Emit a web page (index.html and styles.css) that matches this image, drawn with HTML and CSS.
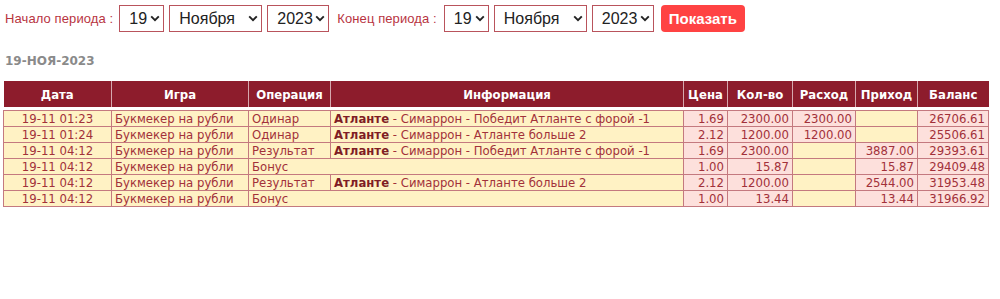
FILE: index.html
```html
<!DOCTYPE html>
<html lang="ru">
<head>
<meta charset="utf-8">
<title>История</title>
<link rel="stylesheet" href="styles.css">
</head>
<body>
<form class="filter">
  <span class="lbl">Начало периода :</span>
  <select class="sel sel-d"><option>19</option></select>
  <select class="sel sel-m"><option>Ноября</option></select>
  <select class="sel sel-y"><option>2023</option></select>
  <span class="lbl lbl-end">Конец периода :</span>
  <select class="sel sel-d"><option>19</option></select>
  <select class="sel sel-m"><option>Ноября</option></select>
  <select class="sel sel-y"><option>2023</option></select>
  <button type="button" class="btn">Показать</button>
</form>
<div class="day">19-НОЯ-2023</div>
<table class="hist">
  <colgroup>
    <col style="width:108px"><col style="width:137px"><col style="width:82px"><col style="width:353px"><col style="width:44px"><col style="width:65px"><col style="width:63px"><col style="width:62px"><col style="width:71px">
  </colgroup>
  <thead>
    <tr class="head">
      <th>Дата</th><th>Игра</th><th>Операция</th><th>Информация</th><th>Цена</th><th>Кол-во</th><th>Расход</th><th>Приход</th><th>Баланс</th>
    </tr>
    <tr class="gap"><td colspan="9"></td></tr>
  </thead>
  <tbody>
    <tr>
      <td class="c">19-11 01:23</td><td>Букмекер на рубли</td><td>Одинар</td><td><b>Атланте</b> - Симаррон - Победит Атланте с форой -1</td><td class="n p">1.69</td><td class="n p">2300.00</td><td class="n p">2300.00</td><td class="n"></td><td class="n p">26706.61</td>
    </tr>
    <tr>
      <td class="c">19-11 01:24</td><td>Букмекер на рубли</td><td>Одинар</td><td><b>Атланте</b> - Симаррон - Атланте больше 2</td><td class="n p">2.12</td><td class="n p">1200.00</td><td class="n p">1200.00</td><td class="n"></td><td class="n p">25506.61</td>
    </tr>
    <tr>
      <td class="c">19-11 04:12</td><td>Букмекер на рубли</td><td>Результат</td><td><b>Атланте</b> - Симаррон - Победит Атланте с форой -1</td><td class="n p">1.69</td><td class="n p">2300.00</td><td class="n"></td><td class="n p">3887.00</td><td class="n p">29393.61</td>
    </tr>
    <tr>
      <td class="c">19-11 04:12</td><td>Букмекер на рубли</td><td colspan="2">Бонус</td><td class="n p">1.00</td><td class="n p">15.87</td><td class="n"></td><td class="n p">15.87</td><td class="n p">29409.48</td>
    </tr>
    <tr>
      <td class="c">19-11 04:12</td><td>Букмекер на рубли</td><td>Результат</td><td><b>Атланте</b> - Симаррон - Атланте больше 2</td><td class="n p">2.12</td><td class="n p">1200.00</td><td class="n"></td><td class="n p">2544.00</td><td class="n p">31953.48</td>
    </tr>
    <tr>
      <td class="c">19-11 04:12</td><td>Букмекер на рубли</td><td colspan="2">Бонус</td><td class="n p">1.00</td><td class="n p">13.44</td><td class="n"></td><td class="n p">13.44</td><td class="n p">31966.92</td>
    </tr>
  </tbody>
</table>
</body>
</html>
```

FILE: styles.css
```css
html, body {
  margin: 0;
  padding: 0;
  background: #ffffff;
}
body {
  font-family: "DejaVu Sans Condensed", "DejaVu Sans", sans-serif;
  font-stretch: condensed;
}
.filter {
  display: flex;
  align-items: center;
  gap: 5px;
  padding: 5px 0 0 5px;
  margin: 0;
  height: 27px;
}
.lbl {
  font-family: "Liberation Sans", Arial, sans-serif;
  font-size: 13px;
  color: #b8343f;
  margin-right: 1px;
  letter-spacing: 0.1px;
}
.lbl-end {
  margin-left: 3px;
  margin-right: 2px;
}
.sel {
  -webkit-appearance: none;
  appearance: none;
  box-sizing: border-box;
  height: 27px;
  border: 1px solid #b9535c;
  border-radius: 0;
  background-color: #ffffff;
  background-image: url("data:image/svg+xml,%3Csvg xmlns='http://www.w3.org/2000/svg' width='10' height='7' viewBox='0 0 10 7'%3E%3Cpath d='M1.2 1.3 L5 5.1 L8.8 1.3' fill='none' stroke='%23222' stroke-width='1.9'/%3E%3C/svg%3E");
  background-repeat: no-repeat;
  background-position: right 3px center;
  background-size: 10px 7px;
  color: #222;
  font-family: "Liberation Sans", Arial, sans-serif;
  font-size: 16px;
  padding: 0 0 0 9px;
  margin: 0;
}
.sel-d { width: 45px; }
.sel-m { width: 93px; }
.sel-y { width: 62px; }
.btn {
  margin-left: 2px;
  height: 27px;
  width: 84px;
  border: none;
  border-radius: 4px;
  background: #ff4343;
  color: #ffffff;
  font-family: "Liberation Sans", Arial, sans-serif;
  font-weight: bold;
  font-size: 15px;
  padding: 0;
}
.day {
  margin: 22px 0 0 5px;
  font-family: "DejaVu Sans", sans-serif;
  font-stretch: normal;
  font-weight: bold;
  font-size: 12px;
  color: #8a8a8a;
  height: 15px;
}
.hist {
  margin: 12px 0 0 3px;
  width: 985px;
  border-collapse: collapse;
  table-layout: fixed;
  font-size: 13px;
  color: #a2313a;
}
.hist th {
  background: #8d1c2c;
  color: #ffffff;
  font-weight: bold;
  height: 26px;
  padding: 0;
  border-left: 1px solid #d6a8ae;
  border-right: 1px solid #d6a8ae;
  font-size: 13px;
}
.hist th:first-child { border-left: none; }
.hist th:last-child { border-right: none; }
.hist .gap td {
  height: 3px;
  padding: 0;
  border: none;
  background: #ffffff;
}
.hist tbody td {
  background: #fff2c4;
  border: 1px solid #c4797f;
  padding: 0 3px;
  line-height: 15px;
  height: 15px;
  white-space: nowrap;
  overflow: hidden;
}
.hist td.c { text-align: center; }
.hist td.n { text-align: right; }
.hist td.p { background: #fde0dc; }
.hist b { color: #7f1d25; }
```
